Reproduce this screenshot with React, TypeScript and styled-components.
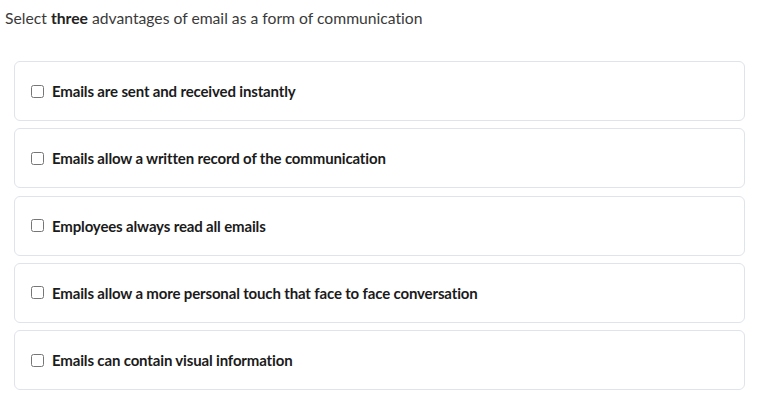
import styled, { createGlobalStyle } from "styled-components";

const Global = createGlobalStyle`
  body {
    margin: 0;
    background: #fff;
    font-family: Lato, "Open Sans", sans-serif;
    font-variant-ligatures: none;
  }
`;

const Page = styled.div`
  padding: 8px 18px 0 5px;
`;

const Prompt = styled.p`
  margin: 0 0 33px;
  font-size: 15.7px;
  line-height: 20px;
  color: #3a3a3a;
  strong {
    font-weight: 700;
    color: #222;
  }
`;

const List = styled.div`
  display: flex;
  flex-direction: column;
  gap: 7.3px;
  margin-left: 9px;
`;

const Option = styled.label`
  display: flex;
  align-items: center;
  gap: 8px;
  height: 60px;
  box-sizing: border-box;
  padding: 0 16px;
  border: 1px solid #dfe3ea;
  border-radius: 6px;
  background: #fff;
  cursor: pointer;
`;

const Box = styled.input`
  margin: 0;
  width: 13px;
  height: 13px;
`;

const Text = styled.span`
  font-size: 15px;
  font-weight: 700;
  letter-spacing: -0.15px;
  color: #1b1b1b;
`;

const options = [
  "Emails are sent and received instantly",
  "Emails allow a written record of the communication",
  "Employees always read all emails",
  "Emails allow a more personal touch that face to face conversation",
  "Emails can contain visual information",
];

export default function App() {
  return (
    <>
      <Global />
      <Page>
        <Prompt>
          Select <strong>three</strong> advantages of email as a form of communication
        </Prompt>
        <List>
          {options.map((o) => (
            <Option key={o}>
              <Box type="checkbox" />
              <Text>{o}</Text>
            </Option>
          ))}
        </List>
      </Page>
    </>
  );
}
